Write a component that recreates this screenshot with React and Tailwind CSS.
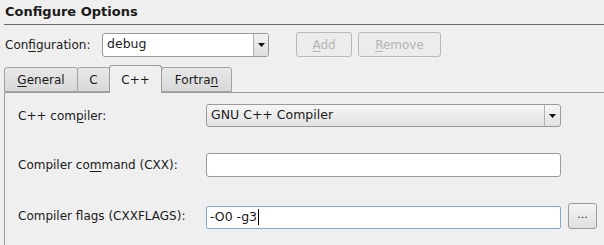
import React from 'react';

const font = { fontFamily: '"DejaVu Sans", "Liberation Sans", sans-serif' };

function Arrow() {
    return (
        <svg width="7" height="4" viewBox="0 0 7 4">
            <path d="M0 0H7L3.5 4Z" fill="#111" />
        </svg>
    );
}

function Mn({ children }) {
    return <span className="underline underline-offset-2">{children}</span>;
}

function Tab({ children, selected, className = '' }) {
    if (selected) {
        return (
            <div className={`h-[28px] -mb-px z-10 flex items-start pt-[5px] justify-center bg-[#efefef] border border-b-0 border-[#9c9c9c] rounded-t-[3px] ${className}`}>
                {children}
            </div>
        );
    }
    return (
        <div className={`h-[25px] flex items-center justify-center bg-gradient-to-b from-[#e8e8e8] to-[#d9d9d9] border border-[#a2a2a2] rounded-t-[3px] ${className}`}>
            {children}
        </div>
    );
}

export default function App() {
    return (
        <div className="w-[604px] h-[245px] bg-[#efefef] overflow-hidden text-[12px] text-[#1a1a1a]" style={font}>
            <div className="h-[24px] pl-[5px] pt-[2px] font-bold text-[13px]">Configure Options</div>
            <div className="ml-[4px] border-t border-[#6a6a6a]" />

            <div className="flex items-center h-[25px] mt-[7px]">
                <span className="ml-[5px] w-[97px]">
                    Con<Mn>f</Mn>iguration:
                </span>
                <div className="w-[167px] h-[24px] flex border border-[#9a9a9a] rounded-[3px] bg-white overflow-hidden">
                    <div className="flex-1 flex items-center pl-[4px] text-[12.5px]">debug</div>
                    <div className="w-[15px] flex items-center justify-center border-l border-[#b0b0b0] bg-gradient-to-b from-[#f2f2f2] to-[#dedede]">
                        <Arrow />
                    </div>
                </div>
                <button className="ml-[27px] w-[56px] h-[25px] border border-[#b8b8b8] rounded-[3px] text-[#b4b4b4] bg-[#ececec]">
                    <Mn>A</Mn>dd
                </button>
                <button className="ml-[6px] w-[83px] h-[25px] border border-[#b8b8b8] rounded-[3px] text-[#b4b4b4] bg-[#ececec]">
                    <Mn>R</Mn>emove
                </button>
            </div>

            <div className="flex items-end h-[28px] mt-[7px] pl-[4px] relative">
                <Tab className="w-[74px]"><Mn>G</Mn>eneral</Tab>
                <Tab className="w-[33px] -ml-px">C</Tab>
                <Tab selected className="w-[53px] -ml-px">C++</Tab>
                <Tab className="w-[71px] -ml-px">Fortra<Mn>n</Mn></Tab>
            </div>

            <div className="ml-[4px] border-l border-t border-[#9c9c9c] h-[160px] pt-[11px] pl-[13px]">
                <div className="grid grid-cols-[181px_355px_29px] gap-x-[7px] gap-y-[26px] items-center">
                    <span>C++ com<Mn>p</Mn>iler:</span>
                    <div className="h-[23px] flex border border-[#9a9a9a] rounded-[3px] bg-gradient-to-b from-[#f6f6f6] to-[#e2e2e2] overflow-hidden">
                        <div className="flex-1 flex items-center pl-[4px] text-[12.5px]">GNU C++ Compiler</div>
                        <div className="w-[16px] flex items-center justify-center border-l border-[#b0b0b0]">
                            <Arrow />
                        </div>
                    </div>
                    <div />

                    <span>Compiler co<Mn>m</Mn>mand (CXX):</span>
                    <div className="h-[24px] border border-[#9a9a9a] rounded-[3px] bg-white" />
                    <div />

                    <span>Compiler f<Mn>l</Mn>ags (CXXFLAGS):</span>
                    <div className="h-[23px] mt-[2px] border border-[#7fa7d8] rounded-[2px] bg-white flex items-center pl-[3px] text-[12.5px]">
                        <span className="border-r border-black pr-px leading-[16px]">-O0 -g3</span>
                    </div>
                    <button className="h-[26px] border border-[#9a9a9a] rounded-[3px] bg-gradient-to-b from-[#f4f4f4] to-[#e0e0e0] text-[11px] pb-[2px]">
                        ...
                    </button>
                </div>
            </div>
        </div>
    );
}
